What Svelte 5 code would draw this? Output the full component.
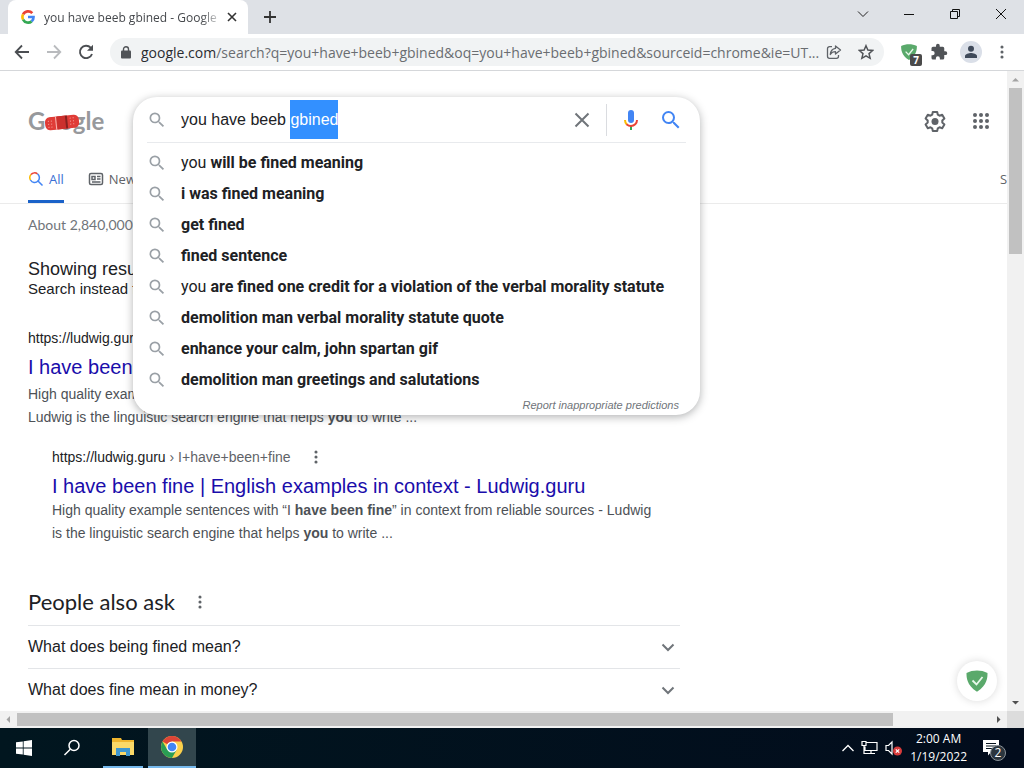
<script>
    let query = $state("you have beeb gbined");

    const suggestions = [
        { plain: "you ", bold: "will be fined meaning" },
        { plain: "", bold: "i was fined meaning" },
        { plain: "", bold: "get fined" },
        { plain: "", bold: "fined sentence" },
        { plain: "you ", bold: "are fined one credit for a violation of the verbal morality statute" },
        { plain: "", bold: "demolition man verbal morality statute quote" },
        { plain: "", bold: "enhance your calm, john spartan gif" },
        { plain: "", bold: "demolition man greetings and salutations" },
    ];

    const questions = ["What does being fined mean?", "What does fine mean in money?"];

    // Select the misspelled word, as after a double click
    function selectWord(node) {
        node.focus();
        node.setSelectionRange(14, 20);
    }
</script>

{#snippet magnifier(size)}
    <svg width={size} height={size} viewBox="0 0 24 24" fill="currentColor" aria-hidden="true">
        <path d="M15.5 14h-.79l-.28-.27A6.47 6.47 0 0 0 16 9.5 6.5 6.5 0 1 0 9.5 16c1.61 0 3.09-.59 4.23-1.57l.27.28v.79l5 4.99L20.49 19l-4.99-5zm-6 0C7.01 14 5 11.99 5 9.5S7.01 5 9.5 5 14 7.01 14 9.5 11.99 14 9.5 14z" />
    </svg>
{/snippet}

{#snippet dots()}
    <svg width="16" height="16" viewBox="0 0 24 24" fill="currentColor" aria-hidden="true">
        <circle cx="12" cy="4.500" r="2.300" /><circle cx="12" cy="12" r="2.300" /><circle cx="12" cy="19.500" r="2.300" />
    </svg>
{/snippet}

{#snippet shield(size)}
    <svg width={size} height={size} viewBox="0 0 24 24" aria-hidden="true">
        <path d="M12 1.500C8.500 1.500 4.500 2.300 1.500 4c0 4-.1 12 10.500 18.800C22.600 16 22.500 8 22.500 4c-3-1.700-7-2.500-10.500-2.500z" fill="#5aa96b" />
        <path d="M7.500 11.500l4 4 6-7.500" fill="none" stroke="#e8f8ea" stroke-width="1.800" />
    </svg>
{/snippet}

<div class="screen">
    <div class="tab-strip">
        <div class="tab">
            <svg width="14" height="14" viewBox="0 0 24 24" fill="none" stroke-width="4.500" aria-hidden="true">
                <path d="M19.400 5.500A9.700 9.700 0 0 0 3.600 7.500" stroke="#ea4335" />
                <path d="M3.600 7.500a9.700 9.700 0 0 0 0 9" stroke="#fbbc05" />
                <path d="M3.600 16.500a9.700 9.700 0 0 0 14.700 3" stroke="#34a853" />
                <path d="M18.300 19.500A9.500 9.500 0 0 0 21.500 12H12" stroke="#4285f4" />
            </svg>
            <span class="tab-title">you have beeb gbined - Google</span>
            <button class="icon" aria-label="Close tab">
                <svg width="10" height="10" viewBox="0 0 10 10" stroke="#333" stroke-width="1.600"><path d="M1 1l8 8M9 1L1 9" /></svg>
            </button>
        </div>
        <button class="icon new-tab" aria-label="New tab">
            <svg width="12" height="12" viewBox="0 0 12 12" stroke="#333" stroke-width="1.800"><path d="M6 0v12M0 6h12" /></svg>
        </button>
        <div class="window-buttons">
            <button class="icon" aria-label="Search tabs">
                <svg width="12" height="12" viewBox="0 0 12 12" fill="none" stroke="#222"><path d="M1 3.500l5 5 5-5" /></svg>
            </button>
            <button class="icon" aria-label="Minimize">
                <svg width="12" height="12" viewBox="0 0 12 12" stroke="#111"><path d="M1 6.500h10" /></svg>
            </button>
            <button class="icon" aria-label="Restore">
                <svg width="12" height="12" viewBox="0 0 12 12" fill="none" stroke="#111"><path d="M1.500 3.500h7v7h-7zM3.500 3.500v-2h7v7h-2" /></svg>
            </button>
            <button class="icon" aria-label="Close window">
                <svg width="12" height="12" viewBox="0 0 12 12" stroke="#111"><path d="M1 1l10 10M11 1L1 11" /></svg>
            </button>
        </div>
    </div>

    <div class="toolbar">
        <button class="icon" aria-label="Back">
            <svg width="16" height="16" viewBox="0 0 16 16" fill="none" stroke="#4b4e52" stroke-width="1.800"><path d="M15 8H2M8 1.500L1.700 8 8 14.500" /></svg>
        </button>
        <button class="icon" aria-label="Forward">
            <svg width="16" height="16" viewBox="0 0 16 16" fill="none" stroke="#b9bbbe" stroke-width="1.800"><path d="M1 8h13M8 1.500L14.300 8 8 14.500" /></svg>
        </button>
        <button class="icon" aria-label="Reload">
            <svg width="16" height="16" viewBox="0 0 16 16"><path d="M14 10a6.200 6.200 0 1 1-1.300-6.300L14 5" fill="none" stroke="#4b4e52" stroke-width="1.900" /><path d="M15 .8v6H9z" fill="#4b4e52" /></svg>
        </button>
        <div class="address">
            <svg width="10" height="13" viewBox="0 0 10 13" aria-hidden="true"><rect y="4.500" width="10" height="8" rx="1" fill="#505357" /><path d="M2.500 5V3.200a2.500 2.500 0 0 1 5 0V5" fill="none" stroke="#505357" stroke-width="1.400" /></svg>
            <span class="url"><b>google.com</b>/search?q=you+have+beeb+gbined&oq=you+have+beeb+gbined&sourceid=chrome&ie=UT...</span>
            <button class="icon" aria-label="Share">
                <svg width="16" height="16" viewBox="0 0 16 16" fill="none" stroke="#5f6368" stroke-width="1.300"><path d="M6 2.700H3.500a2 2 0 0 0-2 2v7.600a2 2 0 0 0 2 2h7a2 2 0 0 0 2-2V11" /><path d="M9.500 2l5 4-5 4V7.700C7 7.700 5.500 8.500 4.300 10.500 4.600 7 6.500 4.800 9.500 4.400z" stroke-linejoin="round" /></svg>
            </button>
            <button class="icon star" aria-label="Bookmark">
                <svg width="16" height="16" viewBox="0 0 24 24" fill="none" stroke="#505357" stroke-width="2.200"><path d="M12 2.500l2.800 6.600 7.200.6-5.500 4.700 1.700 7-6.200-3.700-6.200 3.700 1.700-7L2 9.700l7.200-.6z" /></svg>
            </button>
        </div>
        <div class="actions">
            <button class="icon extension" aria-label="Ad blocker, 7 blocked">
                {@render shield(18)}
                <span class="badge">7</span>
            </button>
            <button class="icon" aria-label="Extensions">
                <svg width="18" height="18" viewBox="0 0 24 24" fill="#505357"><path d="M20.500 11H19V7a2 2 0 0 0-2-2h-4V3.500a2.500 2.500 0 0 0-5 0V5H4a2 2 0 0 0-2 2v3.800h1.500a2.700 2.700 0 0 1 0 5.400H2V20a2 2 0 0 0 2 2h3.800v-1.500a2.700 2.700 0 0 1 5.400 0V22H17a2 2 0 0 0 2-2v-4h1.500a2.500 2.500 0 0 0 0-5z" /></svg>
            </button>
            <button class="icon avatar" aria-label="Profile">
                <svg width="14" height="14" viewBox="0 0 14 14" fill="#3f4a5a"><circle cx="7" cy="3.800" r="3" /><path d="M1 13v-2c0-2 4-3 6-3s6 1 6 3v2z" /></svg>
            </button>
            <button class="icon" aria-label="Chrome menu">{@render dots()}</button>
        </div>
    </div>

    <div class="viewport">
        <div class="page">
            <header>
                <a class="logo" href="/">
                    <span>Google</span>
                    <svg class="bandage" width="38" height="22" viewBox="0 0 38 22" aria-hidden="true">
                        <g transform="rotate(-6 19 11)">
                            <rect x="2" y="5" width="34" height="13" rx="5" fill="#e03c37" />
                            <path d="M14 5h9v13h-9z" fill="#cb302d" />
                            <path d="M13 5v13" stroke="#f5b5b0" />
                            <path d="M23.500 5v13" stroke="#86211f" stroke-width="2" />
                            <path d="M5 9h6M5 12h6M5 15h6M27 8h6M27 11h6M27 14h6" stroke="#f4a29b" stroke-dasharray="1 2" />
                        </g>
                    </svg>
                </a>
                <form class="search" role="search">
                    <div class="panel">
                        <div class="search-row">
                            <span class="grey">{@render magnifier(20)}</span>
                            <input type="text" aria-label="Search" autocomplete="off" spellcheck="false" bind:value={query} {@attach selectWord} />
                            <button class="icon" type="button" aria-label="Clear">
                                <svg width="24" height="24" viewBox="0 0 24 24" fill="none" stroke="#70757a" stroke-width="2"><path d="M5.500 5.500l13 13M18.500 5.500l-13 13" /></svg>
                            </button>
                            <span class="separator"></span>
                            <button class="icon" type="button" aria-label="Search by voice">
                                <svg width="24" height="24" viewBox="0 0 24 24">
                                    <rect x="9" y="2" width="6" height="13" rx="3" fill="#4285f4" />
                                    <path d="M11 18h2v4h-2z" fill="#34a853" />
                                    <path d="M6 12c0 2 .7 3.500 1.800 4.500" fill="none" stroke="#fbbc05" stroke-width="2" />
                                    <path d="M7.500 16.200C9 17.500 10.500 18 12 18c3.300 0 6-2.500 6-6" fill="none" stroke="#ea4335" stroke-width="2" />
                                </svg>
                            </button>
                            <button class="icon blue" aria-label="Google Search">{@render magnifier(24)}</button>
                        </div>
                        <ul>
                            {#each suggestions as suggestion}
                                <li>
                                    <span class="grey">{@render magnifier(20)}</span>
                                    <span>{suggestion.plain}<b>{suggestion.bold}</b></span>
                                </li>
                            {/each}
                        </ul>
                        <a class="report" href="#report">Report inappropriate predictions</a>
                    </div>
                </form>
                <div class="header-buttons">
                    <button class="icon" aria-label="Settings">
                        <svg width="24" height="24" viewBox="0 0 24 24"><path d="M9.800 3h4.400l.6 2.700 1.700 1 2.700-.9 2.200 3.800-2.100 1.900v2l2.100 1.900-2.200 3.800-2.700-.9-1.700 1-.6 2.700H9.800l-.6-2.700-1.700-1-2.700.9-2.200-3.800 2.100-1.900v-2L2.600 9.600l2.200-3.800 2.700.9 1.700-1z" fill="none" stroke="#5f6368" stroke-width="2" stroke-linejoin="round" /><circle cx="12" cy="12.500" r="3.500" fill="#5f6368" /></svg>
                    </button>
                    <button class="icon" aria-label="Google apps">
                        <svg width="24" height="24" viewBox="0 0 24 24" fill="#5f6368">
                            {#each [6, 12, 18] as y}
                                {#each [6, 12, 18] as x}
                                    <circle cx={x} cy={y} r="2" />
                                {/each}
                            {/each}
                        </svg>
                    </button>
                </div>
            </header>

            <nav>
                <a class="active" href="#all">
                    <svg width="16" height="16" viewBox="0 0 16 16" fill="none" stroke-width="1.500" aria-hidden="true">
                        <path d="M2.500 9A4.700 4.700 0 0 1 3 3.500" stroke="#fbbc05" />
                        <path d="M3 3.500a4.700 4.700 0 0 1 6.500-.6" stroke="#ea4335" />
                        <path d="M9.500 2.900A4.700 4.700 0 0 1 10 10l4.500 4.500" stroke="#4285f4" />
                        <path d="M2.500 9A4.700 4.700 0 0 0 10 10" stroke="#4285f4" />
                    </svg>
                    All
                </a>
                <a href="#news">
                    <svg width="16" height="16" viewBox="0 0 16 16" fill="none" stroke="#5f6368" stroke-width="1.500" aria-hidden="true"><rect x="1.500" y="2.500" width="13" height="11" rx="1.500" /><path d="M4 5.500h3v3H4zM9 5.500h3.500M9 8h3.500M4 11h8.500" /></svg>
                    News
                </a>
                <a class="safe" href="#safesearch">SafeSearch</a>
            </nav>

            <main>
                <p class="stats">About 2,840,000 results</p>
                <p class="showing">Showing results for</p>
                <p class="instead">Search instead for</p>

                <article>
                    <cite>https://ludwig.guru</cite>
                    <h3><a href="#ludwig">I have been fined</a></h3>
                    <p class="lead">High quality example sentences with “I have been fined”<br />Ludwig is the linguistic search engine that helps <b>you</b> to write ...</p>
                </article>

                <article class="nested">
                    <div class="source">
                        <cite>https://ludwig.guru <span>› I+have+been+fine</span></cite>
                        <button class="icon" aria-label="About this result">{@render dots()}</button>
                    </div>
                    <h3><a href="#ludwig-fine">I have been fine | English examples in context - Ludwig.guru</a></h3>
                    <p>High quality example sentences with “I <b>have been fine</b>” in context from reliable sources - Ludwig is the linguistic search engine that helps <b>you</b> to write ...</p>
                </article>

                <section>
                    <div class="ask">
                        <h2>People also ask</h2>
                        <button class="icon" aria-label="About these results">{@render dots()}</button>
                    </div>
                    {#each questions as question}
                        <button class="question">
                            {question}
                            <svg width="24" height="24" viewBox="0 0 24 24" fill="none" stroke="#70757a" stroke-width="2" aria-hidden="true"><path d="M6.500 9.500l5.500 5.500 5.500-5.500" /></svg>
                        </button>
                    {/each}
                </section>
            </main>
            <button class="icon blocker" aria-label="Ad blocker">{@render shield(24)}</button>
        </div>

        <div class="scrollbar vertical">
            <svg width="17" height="17" viewBox="0 0 17 17" fill="#a3a3a3"><path d="M5 10.500h7L8.500 7z" /></svg>
            <div class="thumb"></div>
            <svg width="17" height="17" viewBox="0 0 17 17" fill="#505050"><path d="M5 7h7l-3.500 3.500z" /></svg>
        </div>
    </div>

    <div class="scrollbar horizontal">
        <svg width="17" height="17" viewBox="0 0 17 17" fill="#a3a3a3"><path d="M10 5v7L6.500 8.500z" /></svg>
        <div class="track"><div class="thumb"></div></div>
        <svg width="17" height="17" viewBox="0 0 17 17" fill="#505050"><path d="M7 5v7l3.500-3.500z" /></svg>
        <div class="corner"></div>
    </div>

    <div class="taskbar">
        <button class="icon" aria-label="Start">
            <svg width="16" height="16" viewBox="0 0 16 16" fill="#fff"><path d="M0 2.300l6.800-.9v6.200H0zM7.600 1.200L16 0v7.600H7.600zM0 8.400h6.800v6.200L0 13.700zM7.600 8.400H16V16l-8.400-1.200z" /></svg>
        </button>
        <button class="icon" aria-label="Search">
            <svg width="18" height="18" viewBox="0 0 18 18" fill="none" stroke="#fff" stroke-width="1.500"><circle cx="11" cy="6.500" r="5" /><path d="M7.300 10.200L1.500 16" /></svg>
        </button>
        <button class="icon open explorer" aria-label="File Explorer">
            <svg width="22" height="20" viewBox="0 0 22 20"><path d="M0 1h9l1 2h12v15H0z" fill="#f0b62e" /><path d="M0 5h22v13H0z" fill="#fbd968" /><path d="M4 19v-8h14v8h-4v-4H8v4z" fill="#3f97cf" /></svg>
        </button>
        <button class="icon open current" aria-label="Google Chrome">
            <svg width="24" height="24" viewBox="0 0 24 24">
                <circle cx="12" cy="12" r="11" fill="#fcd04b" />
                <path d="M12 12L2.500 6.500A11 11 0 0 1 21.500 6.500H12z" fill="#dc4437" />
                <path d="M2.500 6.500A11 11 0 0 0 12 23l4.700-8.300L12 12 7.300 14.700z" fill="#2a9d54" />
                <circle cx="12" cy="12" r="5.500" fill="#fff" />
                <circle cx="12" cy="12" r="4.300" fill="#4285f4" />
            </svg>
        </button>
        <div class="tray">
            <svg width="12" height="8" viewBox="0 0 12 8" fill="none" stroke="#fff" stroke-width="1.300" aria-hidden="true"><path d="M.5 7L6 1.500 11.500 7" /></svg>
            <svg width="17" height="16" viewBox="0 0 17 16" fill="none" stroke="#fff" stroke-width="1.200" aria-hidden="true"><path d="M5 2.500h11v8H4V6.500M10 10.500v3M6 13.500h8M1 1.500h4v4H1zM3 5.500v8h3" /></svg>
            <svg width="18" height="16" viewBox="0 0 18 16" aria-hidden="true"><path d="M1 5.500h2.500L7 2v12l-3.500-3.500H1z" fill="none" stroke="#fff" stroke-width="1.200" /><circle cx="12.500" cy="11" r="4.500" fill="#d83b3b" /><path d="M10.800 9.300l3.400 3.400M14.200 9.300l-3.400 3.400" stroke="#fff" stroke-width="1.200" /></svg>
            <div class="clock">
                <span>2:00 AM</span>
                <span>1/19/2022</span>
            </div>
            <button class="icon notifications" aria-label="2 notifications">
                <svg width="16" height="16" viewBox="0 0 16 16"><path d="M0 0h16v12H8l-3 3.500V12H0z" fill="#fff" /><path d="M3 3.500h10M3 6h10M3 8.500h7" stroke="#07141f" /></svg>
                <span class="count">2</span>
            </button>
        </div>
    </div>
</div>

<style>
    :global(body) {
        margin: 0;
    }

    .screen {
        display: flex;
        flex-direction: column;
        height: 100vh;
        overflow: hidden;
        background: #fff;
        color: #202124;
        font-family: "Liberation Sans", Arial, sans-serif;
        font-size: 14px;
    }

    .screen * {
        box-sizing: border-box;
    }

    svg {
        display: block;
        flex: none;
    }

    a {
        color: inherit;
        text-decoration: none;
    }

    h2, h3, p, ul {
        margin: 0;
        padding: 0;
        font-weight: normal;
    }

    .icon {
        display: flex;
        flex: none;
        align-items: center;
        justify-content: center;
        padding: 0;
        border: 0;
        background: none;
        color: #5f6368;
        font: inherit;
    }

    /* Browser window */
    .tab-strip {
        display: flex;
        flex: none;
        height: 34px;
        padding-left: 8px;
        background: #dee1e6;
        font-family: "Open Sans", "Segoe UI", sans-serif;
        font-size: 12px;
    }

    .tab {
        display: flex;
        align-items: center;
        width: 240px;
        padding: 0 11px 0 13px;
        border-radius: 8px 8px 0 0;
        background: #fff;
    }

    .tab-title {
        flex: 1;
        margin: 0 4px 0 9px;
        overflow: hidden;
        white-space: nowrap;
        color: #45484c;
        mask-image: linear-gradient(to right, #000 88%, transparent);
    }

    .new-tab {
        width: 44px;
    }

    .window-buttons {
        display: flex;
        margin-left: auto;
        padding-bottom: 6px;
    }

    .window-buttons .icon {
        width: 46px;
    }

    .toolbar {
        display: flex;
        flex: none;
        align-items: center;
        height: 37px;
        padding: 0 14px;
        gap: 16px;
        border-bottom: 1px solid #d5d7da;
    }

    .address {
        display: flex;
        flex: 1;
        align-items: center;
        min-width: 0;
        height: 28px;
        padding: 0 10px 0 11px;
        gap: 4px;
        border-radius: 14px;
        background: #f1f3f4;
        font-family: "Open Sans", "Segoe UI", sans-serif;
    }

    .url {
        flex: 1;
        overflow: hidden;
        margin-left: 6px;
        color: #6a6d71;
        white-space: nowrap;
    }

    .url b {
        color: #2a2c30;
        font-weight: normal;
    }

    .star {
        margin-left: 12px;
    }

    .actions {
        display: flex;
        align-items: center;
        gap: 12px;
    }

    .extension {
        position: relative;
    }

    .badge {
        position: absolute;
        right: -4px;
        bottom: -5px;
        width: 12px;
        border-radius: 2px;
        background: #4a4a4a;
        color: #fff;
        font: bold 10px/12px "Open Sans", sans-serif;
    }

    .avatar {
        width: 22px;
        height: 22px;
        border-radius: 50%;
        background: #dadfe8;
    }

    .viewport {
        display: flex;
        flex: 1;
        min-height: 0;
    }

    .page {
        position: relative;
        flex: 1;
        min-width: 0;
        overflow: hidden;
    }

    /* Search header */
    header {
        display: flex;
        padding: 26px 14px 0 28px;
    }

    .logo {
        position: relative;
        width: 105px;
        color: #97999c;
        font: bold 24px/48px Lato, sans-serif;
    }

    .bandage {
        position: absolute;
        top: 14px;
        left: 15px;
    }

    .search {
        position: relative;
        width: 567px;
        height: 60px;
    }

    .panel {
        position: absolute;
        z-index: 1;
        top: 0;
        left: 0;
        width: 100%;
        border-radius: 24px;
        background: #fff;
        box-shadow: 0 2px 8px rgba(32, 33, 36, 0.35);
    }

    .search-row {
        display: flex;
        align-items: center;
        height: 46px;
        margin: 0 14px;
        border-bottom: 1px solid #e8eaed;
    }

    .grey {
        width: 34px;
        color: #9aa0a6;
    }

    input {
        flex: 1;
        min-width: 0;
        height: 39px;
        padding: 0;
        border: 0;
        outline: 0;
        background: none;
        color: #202124;
        font: 16px/39px "Liberation Sans", Arial, sans-serif;
    }

    input::selection {
        background: #3390ff;
        color: #fff;
    }

    .separator {
        width: 1px;
        height: 32px;
        margin: 0 12px;
        background: #dadce0;
    }

    .blue {
        margin: 0 3px 0 16px;
        color: #4285f4;
    }

    ul {
        padding-top: 4px;
        list-style: none;
    }

    li {
        display: flex;
        align-items: center;
        height: 31px;
        padding: 0 14px;
        font: 16px/22px Roboto, sans-serif;
    }

    li b {
        font-weight: 700;
    }

    .report {
        display: block;
        padding: 3px 21px 2px 0;
        color: #70757a;
        font-size: 11px;
        font-style: italic;
        line-height: 15px;
        text-align: right;
    }

    .header-buttons {
        display: flex;
        height: 48px;
        margin-left: auto;
        gap: 22px;
    }

    nav {
        display: flex;
        height: 47px;
        padding-left: 28px;
        gap: 24px;
        border-bottom: 1px solid #ebebeb;
        color: #5f6368;
        font: 13px/20px "Open Sans", sans-serif;
    }

    nav a {
        display: flex;
        align-items: center;
        gap: 5px;
        border-bottom: 3px solid transparent;
    }

    nav .active {
        border-color: #1a62c9;
        color: #3b6fd4;
    }

    .safe {
        width: 7px;
        margin-left: auto;
        overflow: hidden;
    }

    /* Results */
    main {
        width: 680px;
        max-width: 100%;
        padding-left: 28px;
    }

    .stats {
        color: #70757a;
        font: 14px/42px Lato, sans-serif;
    }

    .showing {
        margin-top: 12px;
        font-size: 18px;
        line-height: 22px;
    }

    .instead {
        font-size: 15px;
        line-height: 18px;
    }

    article {
        margin-top: 30px;
        color: #4d5156;
        line-height: 23px;
    }

    .nested {
        margin: 18px 24px 0;
    }

    cite {
        display: block;
        color: #202124;
        font-style: normal;
        line-height: 20px;
    }

    cite span {
        color: #5f6368;
    }

    .source, .ask {
        display: flex;
        align-items: center;
        gap: 17px;
    }

    h3 {
        margin-top: 6px;
        color: #1a0dab;
        font-size: 20px;
        line-height: 26px;
    }

    .lead {
        margin-top: 3px;
    }

    section {
        margin-top: 43px;
    }

    .ask {
        padding-bottom: 9px;
    }

    h2 {
        font: 22px/28px Lato, sans-serif;
    }

    .question {
        display: flex;
        align-items: center;
        justify-content: space-between;
        width: 100%;
        height: 43px;
        padding: 0;
        border: 0;
        border-top: 1px solid #e3e5e8;
        background: none;
        color: #202124;
        font: 16px/24px "Liberation Sans", Arial, sans-serif;
        text-align: left;
    }

    .blocker {
        position: absolute;
        right: 10px;
        bottom: 10px;
        width: 40px;
        height: 40px;
        border-radius: 50%;
        background: #fff;
        box-shadow: 0 0 8px rgba(0, 0, 0, 0.15);
    }

    .scrollbar {
        display: flex;
        flex: none;
        background: #f1f1f1;
    }

    .thumb {
        background: #c1c1c1;
    }

    .vertical {
        flex-direction: column;
        justify-content: space-between;
        width: 17px;
    }

    .vertical .thumb {
        width: 13px;
        height: 26%;
        margin: 0 2px auto;
    }

    .horizontal {
        height: 17px;
    }

    .track {
        flex: 1;
        padding: 2px 0;
    }

    .track .thumb {
        width: 90%;
        height: 13px;
    }

    .corner {
        width: 17px;
        background: #dcdcdc;
    }

    /* Windows taskbar */
    .taskbar {
        display: flex;
        flex: none;
        height: 40px;
        background: linear-gradient(to right, #01161f, #020c1c);
        color: #fff;
        font: 12px/18px "Open Sans", "Segoe UI", sans-serif;
    }

    .taskbar > .icon {
        width: 48px;
    }

    .open {
        border-bottom: 2px solid #76b9ed;
    }

    .taskbar > .explorer {
        width: 40px;
        margin: 0 5px 0 7px;
    }

    .current {
        background: #32464d;
    }

    .tray {
        display: flex;
        align-items: center;
        margin-left: auto;
        padding-right: 25px;
        gap: 7px;
    }

    .clock {
        display: flex;
        flex-direction: column;
        align-items: center;
    }

    .notifications {
        position: relative;
        margin-left: 9px;
    }

    .count {
        position: absolute;
        top: 5px;
        left: 7px;
        width: 16px;
        border: 1px solid #8a9299;
        border-radius: 50%;
        background: #2b353d;
        color: #fff;
        font-size: 12px;
        line-height: 14px;
    }
</style>
